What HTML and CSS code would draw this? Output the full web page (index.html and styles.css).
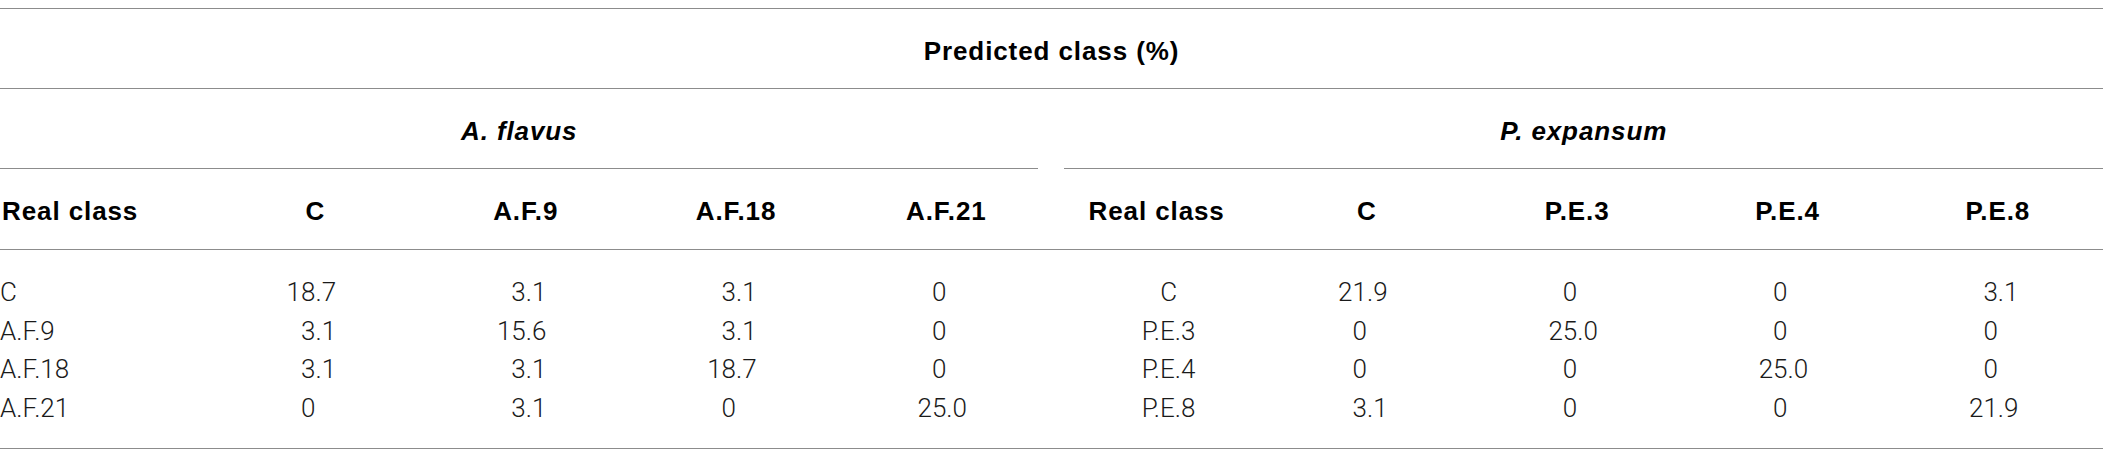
FILE: index.html
```html
<!DOCTYPE html>
<html lang="en">
<head>
<meta charset="utf-8">
<title>Predicted class table</title>
<link rel="stylesheet" href="styles.css">
</head>
<body>
<table class="conf">
  <colgroup>
    <col><col><col><col><col><col><col><col><col><col>
  </colgroup>
  <thead>
    <tr class="row-top">
      <th colspan="10">Predicted class (%)</th>
    </tr>
    <tr class="row-group">
      <th colspan="5" class="grp"><div class="grp-l"><em>A. flavus</em></div></th>
      <th colspan="5" class="grp"><div class="grp-r"><em>P. expansum</em></div></th>
    </tr>
    <tr class="row-head">
      <th class="first">Real class</th>
      <th>C</th>
      <th>A.F.9</th>
      <th>A.F.18</th>
      <th>A.F.21</th>
      <th>Real class</th>
      <th>C</th>
      <th>P.E.3</th>
      <th>P.E.4</th>
      <th>P.E.8</th>
    </tr>
  </thead>
  <tbody>
    <tr>
      <td class="first">C</td>
      <td><div class="dec"><span>18</span><span>.7</span></div></td>
      <td><div class="dec"><span>3</span><span>.1</span></div></td>
      <td><div class="dec"><span>3</span><span>.1</span></div></td>
      <td><div class="dec"><span>0</span><span></span></div></td>
      <td class="rc2">C</td>
      <td><div class="dec"><span>21</span><span>.9</span></div></td>
      <td><div class="dec"><span>0</span><span></span></div></td>
      <td><div class="dec"><span>0</span><span></span></div></td>
      <td><div class="dec"><span>3</span><span>.1</span></div></td>
    </tr>
    <tr>
      <td class="first">A.F.9</td>
      <td><div class="dec"><span>3</span><span>.1</span></div></td>
      <td><div class="dec"><span>15</span><span>.6</span></div></td>
      <td><div class="dec"><span>3</span><span>.1</span></div></td>
      <td><div class="dec"><span>0</span><span></span></div></td>
      <td class="rc2">P.E.3</td>
      <td><div class="dec"><span>0</span><span></span></div></td>
      <td><div class="dec"><span>25</span><span>.0</span></div></td>
      <td><div class="dec"><span>0</span><span></span></div></td>
      <td><div class="dec"><span>0</span><span></span></div></td>
    </tr>
    <tr>
      <td class="first">A.F.18</td>
      <td><div class="dec"><span>3</span><span>.1</span></div></td>
      <td><div class="dec"><span>3</span><span>.1</span></div></td>
      <td><div class="dec"><span>18</span><span>.7</span></div></td>
      <td><div class="dec"><span>0</span><span></span></div></td>
      <td class="rc2">P.E.4</td>
      <td><div class="dec"><span>0</span><span></span></div></td>
      <td><div class="dec"><span>0</span><span></span></div></td>
      <td><div class="dec"><span>25</span><span>.0</span></div></td>
      <td><div class="dec"><span>0</span><span></span></div></td>
    </tr>
    <tr>
      <td class="first">A.F.21</td>
      <td><div class="dec"><span>0</span><span></span></div></td>
      <td><div class="dec"><span>3</span><span>.1</span></div></td>
      <td><div class="dec"><span>0</span><span></span></div></td>
      <td><div class="dec"><span>25</span><span>.0</span></div></td>
      <td class="rc2">P.E.8</td>
      <td><div class="dec"><span>3</span><span>.1</span></div></td>
      <td><div class="dec"><span>0</span><span></span></div></td>
      <td><div class="dec"><span>0</span><span></span></div></td>
      <td><div class="dec"><span>21</span><span>.9</span></div></td>
    </tr>
  </tbody>
</table>
</body>
</html>
```

FILE: styles.css
```css
html, body {
  margin: 0;
  padding: 0;
  background: #ffffff;
}

.conf {
  width: 2103px;
  margin-top: 8px;
  border-collapse: separate;
  border-spacing: 0;
  table-layout: fixed;
  color: #000;
}

.conf col {
  width: 10%;
}

.conf th {
  font-family: "Liberation Sans", Arial, sans-serif;
  font-weight: bold;
  font-size: 26px;
  letter-spacing: 0.9px;
  line-height: 30px;
  text-align: center;
  padding: 27px 0 22px;
  border-bottom: 1px solid #8c8c8c;
  white-space: nowrap;
}

.row-top th {
  border-top: 1px solid #8c8c8c;
}

.row-group th.grp {
  padding: 0;
  border-bottom: none;
}

.grp-l,
.grp-r {
  padding: 27px 0 22px;
  border-bottom: 1px solid #8c8c8c;
}

.grp-l {
  margin-right: 13px;
}

.grp-r {
  margin-left: 13px;
}

.grp em {
  font-style: italic;
}

.row-head th {
  padding-bottom: 23px;
}

.conf th.first {
  text-align: left;
  padding-left: 2px;
}

.conf td {
  font-family: Roboto, "Liberation Sans", sans-serif;
  font-weight: 300;
  font-size: 26px;
  line-height: 38.5px;
  color: #1a1a1a;
  text-align: center;
  padding: 0;
  white-space: nowrap;
}

.conf td.first {
  text-align: left;
}

.conf td.rc2 {
  padding-left: 24px;
}

.conf tbody tr:first-child td {
  padding-top: 23px;
}

.conf tbody tr:last-child td {
  padding-bottom: 21px;
  border-bottom: 1px solid #8c8c8c;
}

.dec {
  display: grid;
  grid-template-columns: 1fr 1fr;
}

.dec span:first-child {
  text-align: right;
}

.dec span:last-child {
  text-align: left;
}
```
